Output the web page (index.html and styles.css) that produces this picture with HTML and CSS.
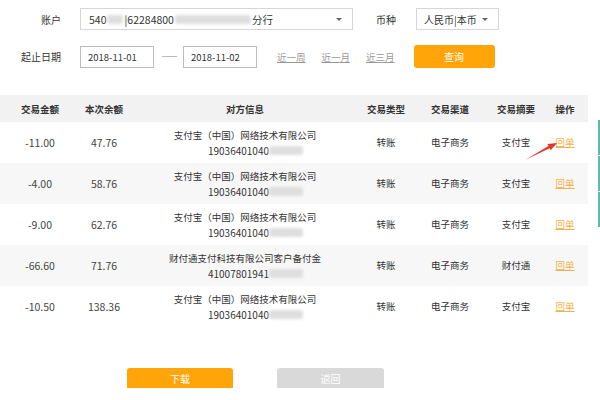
FILE: index.html
```html
<!DOCTYPE html>
<html lang="zh">
<head>
<meta charset="utf-8">
<link rel="stylesheet" href="styles.css">
</head>
<body>
<div class="page">
  <div class="form">
    <div class="row">
      <span class="label">账户</span>
      <div class="select account">
        <span class="sel-text">540<span class="blur w12"></span>|62284800<span class="blur w90"></span>分行</span>
        <span class="caret"></span>
      </div>
      <span class="label2">币种</span>
      <div class="select currency">
        <span class="sel-text">人民币|本币</span>
        <span class="caret"></span>
      </div>
    </div>
    <div class="row row2">
      <span class="label">起止日期</span>
      <div class="date">2018-11-01</div>
      <span class="dash"></span>
      <div class="date">2018-11-02</div>
      <div class="quick">
        <a class="qlink">近一周</a>
        <a class="qlink">近一月</a>
        <a class="qlink">近三月</a>
      </div>
      <button class="btn-query">查询</button>
    </div>
  </div>

  <table class="grid">
    <colgroup>
      <col class="c1"><col class="c2"><col class="c3"><col class="c4"><col class="c5"><col class="c6"><col class="c7">
    </colgroup>
    <thead>
      <tr><th>交易金额</th><th>本次余额</th><th>对方信息</th><th>交易类型</th><th>交易渠道</th><th>交易摘要</th><th>操作</th></tr>
    </thead>
    <tbody>
      <tr><td class="num">-11.00</td><td class="num">47.76</td><td><div>支付宝（中国）网络技术有限公司</div><div class="acct">19036401040<span class="blur w30"></span></div></td><td>转账</td><td>电子商务</td><td>支付宝</td><td><a class="op">回单</a></td></tr>
      <tr class="alt"><td class="num">-4.00</td><td class="num">58.76</td><td><div>支付宝（中国）网络技术有限公司</div><div class="acct">19036401040<span class="blur w30"></span></div></td><td>转账</td><td>电子商务</td><td>支付宝</td><td><a class="op">回单</a></td></tr>
      <tr><td class="num">-9.00</td><td class="num">62.76</td><td><div>支付宝（中国）网络技术有限公司</div><div class="acct">19036401040<span class="blur w30"></span></div></td><td>转账</td><td>电子商务</td><td>支付宝</td><td><a class="op">回单</a></td></tr>
      <tr class="alt"><td class="num">-66.60</td><td class="num">71.76</td><td><div>财付通支付科技有限公司客户备付金</div><div class="acct">41007801941<span class="blur w30"></span></div></td><td>转账</td><td>电子商务</td><td>财付通</td><td><a class="op">回单</a></td></tr>
      <tr><td class="num">-10.50</td><td class="num">138.36</td><td><div>支付宝（中国）网络技术有限公司</div><div class="acct">19036401040<span class="blur w30"></span></div></td><td>转账</td><td>电子商务</td><td>支付宝</td><td><a class="op">回单</a></td></tr>
    </tbody>
  </table>

  <div class="actions">
    <button class="btn-dl">下载</button>
    <button class="btn-back">返回</button>
  </div>

  <div class="scrollmark"><span></span><span></span><span></span></div>
  <svg class="arrow" width="42" height="28" viewBox="0 0 42 28">
    <polygon points="5,24 28.5,10.1 27.4,8.1 37,7 30.7,14.3 29.6,12.3" fill="#e8322a"/>
  </svg>
</div>
</body>
</html>
```

FILE: styles.css
```css
html, body {
  margin: 0;
  padding: 0;
  background: #fff;
}
body {
  font-family: "Noto Sans CJK SC", "Noto Sans", sans-serif;
  color: #333;
  font-size: 10px;
}
.page {
  position: relative;
  width: 600px;
  height: 400px;
  overflow: hidden;
}
.form {
  padding-top: 8px;
}
.row {
  display: flex;
  align-items: center;
  height: 22px;
}
.row2 {
  margin-top: 15px;
  height: 23px;
}
.label {
  width: 61px;
  text-align: right;
  margin-right: 19px;
  color: #333;
}
.label2 {
  margin-left: 23px;
  margin-right: 20px;
}
.select {
  box-sizing: border-box;
  height: 22px;
  border: 1px solid #d6d6d6;
  display: flex;
  align-items: center;
  justify-content: space-between;
  padding: 0 10px 0 8px;
  background: #fff;
}
.account {
  width: 273px;
  font-size: 10.5px;
}
.currency {
  width: 83px;
  padding-left: 7px;
}
.sel-text {
  display: flex;
  align-items: center;
  white-space: nowrap;
  color: #333;
}
.caret {
  width: 0;
  height: 0;
  border-left: 3px solid transparent;
  border-right: 3px solid transparent;
  border-top: 3px solid #666;
}
.blur {
  display: inline-block;
  height: 9px;
  background: #dedede;
  border-radius: 3px;
  filter: blur(1.5px);
  margin: 0 1px;
}
.w12 { width: 16px; }
.w90 { width: 76px; }
.w30 { width: 34px; }
.date {
  box-sizing: border-box;
  width: 74px;
  height: 22px;
  border: 1px solid #bdbdbd;
  display: flex;
  align-items: center;
  padding-left: 7px;
  font-size: 9.5px;
  color: #333;
}
.dash {
  width: 15px;
  height: 1px;
  background: #bbb;
  margin: 0 6px 0 8px;
}
.quick {
  display: flex;
  gap: 16px;
  margin-left: 20px;
}
.qlink {
  color: #999;
  text-decoration: underline;
  font-size: 9.5px;
}
.btn-query {
  margin-left: 19px;
  width: 81px;
  height: 23px;
  border: none;
  border-radius: 3px;
  background: #ffa50a;
  color: #fff;
  font-family: inherit;
  font-size: 10px;
  padding: 0;
}
.grid {
  margin-top: 27px;
  width: 588px;
  border-collapse: collapse;
  table-layout: fixed;
  font-size: 9.5px;
}
.c1 { width: 80px; }
.c2 { width: 48px; }
.c3 { width: 234px; }
.c4 { width: 48px; }
.c5 { width: 80px; }
.c6 { width: 52px; }
.c7 { width: 46px; }
.grid th {
  height: 27px;
  background: #f2f2f2;
  font-weight: bold;
  color: #333;
  padding: 0;
  text-align: center;
  font-size: 9.5px;
}
.grid td {
  height: 41px;
  padding: 0;
  text-align: center;
  vertical-align: middle;
  color: #333;
  line-height: 15px;
}
.grid tr.alt td {
  background: #f7f7f7;
}
.grid td.num {
  font-size: 10.5px;
  color: #444;
}
.acct {
  display: flex;
  justify-content: center;
  align-items: center;
  font-size: 10px;
  padding-left: 22px;
}
.acct .blur {
  margin-left: 0;
}
.op {
  color: #f5b04a;
  text-decoration: underline;
}
.actions {
  display: flex;
  margin-top: 41px;
  padding-left: 127px;
  gap: 44px;
}
.actions button {
  height: 20px;
  border: none;
  border-radius: 3px 3px 0 0;
  color: #fff;
  font-family: inherit;
  font-size: 10px;
  padding: 0;
}
.btn-dl {
  width: 106px;
  background: #ffa50a;
}
.btn-back {
  width: 107px;
  background: #d9d9d9;
}
.scrollmark {
  position: absolute;
  left: 598px;
  top: 120px;
  width: 2px;
  display: flex;
  flex-direction: column;
  gap: 1px;
}
.scrollmark span {
  display: block;
  height: 35px;
  background: #5cbca6;
}
.arrow {
  position: absolute;
  left: 520px;
  top: 136px;
}
```
